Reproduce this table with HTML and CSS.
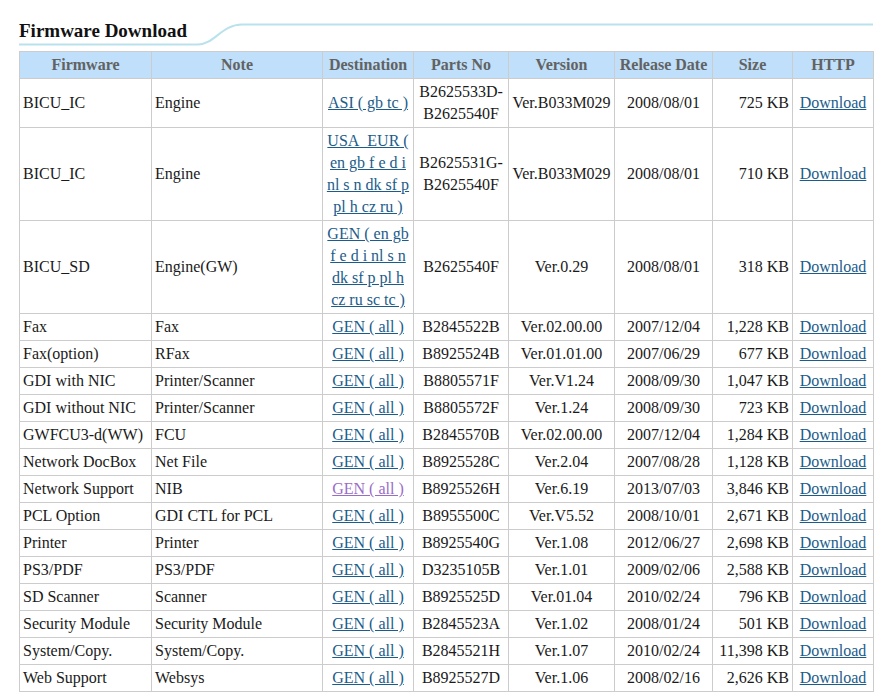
FILE: index.html
```html
<!DOCTYPE html>
<html>
<head>
<meta charset="utf-8">
<title>Firmware Download</title>
<link rel="stylesheet" href="styles.css">
</head>
<body>
<div class="page">
  <div class="heading">
    <svg class="heading-line" width="889" height="51" viewBox="0 0 889 51" aria-hidden="true">
      <path d="M19 44.5 L198 44.5 C214 44.5 222 24.5 242 24.5 L873 24.5" fill="none" stroke="#b9e2ec" stroke-width="2"/>
    </svg>
    <h1 class="title">Firmware Download</h1>
  </div>
  <table class="fw">
    <colgroup>
      <col class="c-fw"><col class="c-note"><col class="c-dest"><col class="c-part"><col class="c-ver"><col class="c-date"><col class="c-size"><col class="c-http">
    </colgroup>
    <thead>
      <tr><th>Firmware</th><th>Note</th><th>Destination</th><th>Parts No</th><th>Version</th><th>Release Date</th><th>Size</th><th>HTTP</th></tr>
    </thead>
    <tbody>
      <tr><td>BICU_IC</td><td>Engine</td><td class="ctr"><a href="#">ASI ( gb tc )</a></td><td class="ctr">B2625533D-B2625540F</td><td class="ctr">Ver.B033M029</td><td class="ctr">2008/08/01</td><td class="rt">725 KB</td><td class="ctr"><a href="#">Download</a></td></tr>
      <tr><td>BICU_IC</td><td>Engine</td><td class="ctr"><a href="#">USA_EUR ( en gb f e d i nl s n dk sf p pl h cz ru )</a></td><td class="ctr">B2625531G-B2625540F</td><td class="ctr">Ver.B033M029</td><td class="ctr">2008/08/01</td><td class="rt">710 KB</td><td class="ctr"><a href="#">Download</a></td></tr>
      <tr><td>BICU_SD</td><td>Engine(GW)</td><td class="ctr"><a href="#">GEN ( en gb f e d i nl s n dk sf p pl h cz ru sc tc )</a></td><td class="ctr">B2625540F</td><td class="ctr">Ver.0.29</td><td class="ctr">2008/08/01</td><td class="rt">318 KB</td><td class="ctr"><a href="#">Download</a></td></tr>
      <tr><td>Fax</td><td>Fax</td><td class="ctr"><a href="#">GEN ( all )</a></td><td class="ctr">B2845522B</td><td class="ctr">Ver.02.00.00</td><td class="ctr">2007/12/04</td><td class="rt">1,228 KB</td><td class="ctr"><a href="#">Download</a></td></tr>
      <tr><td>Fax(option)</td><td>RFax</td><td class="ctr"><a href="#">GEN ( all )</a></td><td class="ctr">B8925524B</td><td class="ctr">Ver.01.01.00</td><td class="ctr">2007/06/29</td><td class="rt">677 KB</td><td class="ctr"><a href="#">Download</a></td></tr>
      <tr><td>GDI with NIC</td><td>Printer/Scanner</td><td class="ctr"><a href="#">GEN ( all )</a></td><td class="ctr">B8805571F</td><td class="ctr">Ver.V1.24</td><td class="ctr">2008/09/30</td><td class="rt">1,047 KB</td><td class="ctr"><a href="#">Download</a></td></tr>
      <tr><td>GDI without NIC</td><td>Printer/Scanner</td><td class="ctr"><a href="#">GEN ( all )</a></td><td class="ctr">B8805572F</td><td class="ctr">Ver.1.24</td><td class="ctr">2008/09/30</td><td class="rt">723 KB</td><td class="ctr"><a href="#">Download</a></td></tr>
      <tr><td>GWFCU3-d(WW)</td><td>FCU</td><td class="ctr"><a href="#">GEN ( all )</a></td><td class="ctr">B2845570B</td><td class="ctr">Ver.02.00.00</td><td class="ctr">2007/12/04</td><td class="rt">1,284 KB</td><td class="ctr"><a href="#">Download</a></td></tr>
      <tr><td>Network DocBox</td><td>Net File</td><td class="ctr"><a href="#">GEN ( all )</a></td><td class="ctr">B8925528C</td><td class="ctr">Ver.2.04</td><td class="ctr">2007/08/28</td><td class="rt">1,128 KB</td><td class="ctr"><a href="#">Download</a></td></tr>
      <tr><td>Network Support</td><td>NIB</td><td class="ctr"><a href="#" class="visited">GEN ( all )</a></td><td class="ctr">B8925526H</td><td class="ctr">Ver.6.19</td><td class="ctr">2013/07/03</td><td class="rt">3,846 KB</td><td class="ctr"><a href="#">Download</a></td></tr>
      <tr><td>PCL Option</td><td>GDI CTL for PCL</td><td class="ctr"><a href="#">GEN ( all )</a></td><td class="ctr">B8955500C</td><td class="ctr">Ver.V5.52</td><td class="ctr">2008/10/01</td><td class="rt">2,671 KB</td><td class="ctr"><a href="#">Download</a></td></tr>
      <tr><td>Printer</td><td>Printer</td><td class="ctr"><a href="#">GEN ( all )</a></td><td class="ctr">B8925540G</td><td class="ctr">Ver.1.08</td><td class="ctr">2012/06/27</td><td class="rt">2,698 KB</td><td class="ctr"><a href="#">Download</a></td></tr>
      <tr><td>PS3/PDF</td><td>PS3/PDF</td><td class="ctr"><a href="#">GEN ( all )</a></td><td class="ctr">D3235105B</td><td class="ctr">Ver.1.01</td><td class="ctr">2009/02/06</td><td class="rt">2,588 KB</td><td class="ctr"><a href="#">Download</a></td></tr>
      <tr><td>SD Scanner</td><td>Scanner</td><td class="ctr"><a href="#">GEN ( all )</a></td><td class="ctr">B8925525D</td><td class="ctr">Ver.01.04</td><td class="ctr">2010/02/24</td><td class="rt">796 KB</td><td class="ctr"><a href="#">Download</a></td></tr>
      <tr><td>Security Module</td><td>Security Module</td><td class="ctr"><a href="#">GEN ( all )</a></td><td class="ctr">B2845523A</td><td class="ctr">Ver.1.02</td><td class="ctr">2008/01/24</td><td class="rt">501 KB</td><td class="ctr"><a href="#">Download</a></td></tr>
      <tr><td>System/Copy.</td><td>System/Copy.</td><td class="ctr"><a href="#">GEN ( all )</a></td><td class="ctr">B2845521H</td><td class="ctr">Ver.1.07</td><td class="ctr">2010/02/24</td><td class="rt">11,398 KB</td><td class="ctr"><a href="#">Download</a></td></tr>
      <tr><td>Web Support</td><td>Websys</td><td class="ctr"><a href="#">GEN ( all )</a></td><td class="ctr">B8925527D</td><td class="ctr">Ver.1.06</td><td class="ctr">2008/02/16</td><td class="rt">2,626 KB</td><td class="ctr"><a href="#">Download</a></td></tr>
    </tbody>
  </table>
</div>
</body>
</html>
```

FILE: styles.css
```css
html, body {
  margin: 0;
  padding: 0;
  background: #ffffff;
}

body {
  font-family: "Liberation Serif", "Times New Roman", serif;
  font-size: 16px;
  color: #1a1a1a;
}

.page {
  padding: 0 0 0 19px;
}

.heading {
  position: relative;
  height: 51px;
}

.heading-line {
  position: absolute;
  left: -19px;
  top: 0;
}

.title {
  position: relative;
  margin: 0;
  padding-top: 20px;
  font-size: 19px;
  line-height: 22px;
  font-weight: bold;
  color: #111111;
}

.fw {
  border-collapse: collapse;
  table-layout: fixed;
  width: 855px;
  border: 1px solid #cccccc;
}

.c-fw { width: 132px; }
.c-note { width: 171px; }
.c-dest { width: 91px; }
.c-part { width: 95px; }
.c-ver { width: 106px; }
.c-date { width: 98px; }
.c-size { width: 80px; }
.c-http { width: 81px; }

.fw th,
.fw td {
  border: 1px solid #cccccc;
  padding: 2px 3px;
  line-height: 22px;
  vertical-align: middle;
}

.fw th {
  background: #bfdffa;
  color: #626262;
  font-weight: bold;
  text-align: center;
}

.fw td {
  text-align: left;
}

.fw td.ctr {
  text-align: center;
}

.fw td.rt {
  text-align: right;
}

.fw a {
  color: #1b5c8a;
  text-decoration: underline;
}

.fw a.visited {
  color: #9a6cc8;
}
```
